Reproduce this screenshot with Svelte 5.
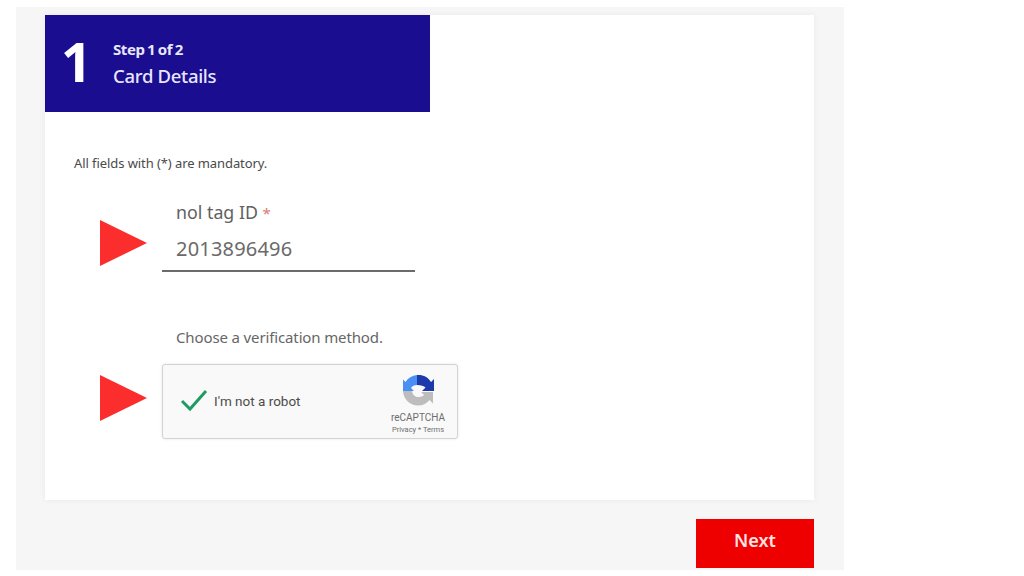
<script lang="ts">
    let tagId = $state('2013896496');
</script>

<div class="panel">
    <div class="card">
        <div class="step">
            <span class="step-num">1</span>
            <div class="step-text">
                <strong>Step 1 of 2</strong>
                <span>Card Details</span>
            </div>
        </div>

        <p class="note">All fields with (*) are mandatory.</p>

        <div class="row">
            <svg class="arrow" viewBox="0 0 47 46" aria-hidden="true"><polygon points="0,0 47,23 0,46" /></svg>
            <div class="field">
                <span class="label">nol tag ID <em>*</em></span>
                <span class="value">{tagId}</span>
            </div>
        </div>

        <p class="choose">Choose a verification method.</p>

        <div class="row captcha-row">
            <svg class="arrow" viewBox="0 0 47 46" aria-hidden="true"><polygon points="0,0 47,23 0,46" /></svg>
            <div class="captcha">
                <svg class="check" viewBox="0 0 28 24" aria-hidden="true">
                    <path d="M2 13 L10 21 L26 3" />
                </svg>
                <span class="robot">I'm not a robot</span>
                <div class="brand">
                    <svg class="logo" viewBox="0 0 32 32" aria-hidden="true">
                        <path fill="#4a90f2" d="M15 1 C10 1.500 6 4 3.500 8 L1 5.500 L1 17 L12 17 L9 14 C10 12 12.500 11 15 11 Z" />
                        <path fill="#1c3aa9" d="M15 1 C21 0.500 26 3 29 8 L32 5 L32 17 L20 17 L23.500 13.500 C22 12 19 11 15 11 Z" />
                        <path fill="#bdbdbd" d="M1 17 L10 17 C10.500 20.500 13 23 16 23 C18.500 23 20.500 22.500 22 21 L19 18 L31 18 L31 29.500 L27.500 26 C25 29.500 21 31.500 16 31.500 C7.500 31.500 1.500 25 1 17 Z" />
                    </svg>
                    <span class="re">reCAPTCHA</span>
                    <span class="terms">Privacy * Terms</span>
                </div>
            </div>
        </div>
    </div>

    <div class="actions">
        <button class="next">Next</button>
    </div>
</div>

<style>
    :global(body) {
        margin: 0;
        background: #fff;
    }

    .panel {
        box-sizing: border-box;
        width: 828px;
        height: 563px;
        margin: 7px 0 0 16px;
        padding: 8px 30px 2px 29px;
        background: #f6f6f6;
        font-family: "Noto Sans", "Open Sans", sans-serif;
    }

    .card {
        box-sizing: border-box;
        height: 485px;
        background: #fff;
        box-shadow: 0 0 6px #0000000f;
        overflow: hidden;
    }

    .step {
        display: flex;
        align-items: center;
        box-sizing: border-box;
        width: 385px;
        height: 97px;
        padding-left: 16px;
        gap: 27px;
        background: #1a0d90;
        color: #fff;
    }

    .step-num {
        width: 25px;
        margin-top: -6px;
        font-size: 54px;
        font-weight: 700;
        line-height: 1;
    }

    .step-text {
        display: flex;
        flex-direction: column;
        gap: 6px;
        margin-top: -1px;
        color: #e8e6fb;
    }

    .step-text strong {
        font-size: 15px;
        font-weight: 700;
        line-height: 19px;
        letter-spacing: -0.4px;
        word-spacing: -1px;
    }

    .step-text span {
        font-size: 18.500px;
        font-weight: 500;
        line-height: 22px;
        letter-spacing: -0.3px;
    }

    .note {
        margin: 42px 0 0 29px;
        font-size: 13px;
        line-height: 18px;
        letter-spacing: -0.08px;
        color: #4a4a4a;
    }

    .row {
        display: flex;
        align-items: center;
        gap: 15px;
        margin-top: 27px;
        padding-left: 55px;
    }

    .arrow {
        flex-shrink: 0;
        width: 47px;
        height: 46px;
        margin-top: 14px;
        fill: #fb2d2d;
    }

    .field {
        display: flex;
        flex-direction: column;
        box-sizing: border-box;
        width: 253px;
        height: 73px;
        padding: 1px 14px 0;
        border-bottom: 2px solid #6b6b6b;
    }

    .label {
        font-size: 17.800px;
        line-height: 24px;
        color: #616161;
    }

    .label em {
        font-style: normal;
        font-size: 15px;
        color: #d97a73;
    }

    .value {
        margin-top: 11px;
        font-size: 20px;
        line-height: 26px;
        letter-spacing: 0.2px;
        color: #6a6a6a;
    }

    .choose {
        margin: 54px 0 0 131px;
        font-size: 15px;
        line-height: 22px;
        letter-spacing: -0.13px;
        color: #666;
    }

    .captcha-row {
        margin-top: 16px;
    }

    .captcha-row .arrow {
        margin-top: -8px;
    }

    .captcha {
        display: flex;
        align-items: center;
        box-sizing: border-box;
        width: 296px;
        height: 75px;
        padding: 0 12px 0 17px;
        background: #f9f9f9;
        border: 1px solid #d3d3d3;
        border-radius: 3px;
        box-shadow: 0 0 3px #0000001a;
        font-family: Roboto, "Liberation Sans", sans-serif;
    }

    .check {
        width: 28px;
        height: 24px;
        margin-top: -3px;
    }

    .check path {
        fill: none;
        stroke: #1f9c61;
        stroke-width: 3;
    }

    .robot {
        margin: -2px 0 0 6px;
        font-size: 13.500px;
        color: #4c4c4c;
    }

    .brand {
        display: flex;
        flex-direction: column;
        align-items: center;
        margin: 6px 0 0 auto;
        color: #6d6d6d;
    }

    .logo {
        width: 32px;
        height: 32px;
        margin-bottom: 6px;
    }

    .re {
        font-size: 10px;
        line-height: 12px;
    }

    .terms {
        margin-top: 1px;
        font-size: 7.500px;
        line-height: 10px;
    }

    .actions {
        display: flex;
        justify-content: flex-end;
        margin-top: 19px;
    }

    .next {
        width: 118px;
        height: 49px;
        padding: 0 0 8px;
        border: none;
        background: #ee0000;
        color: #ffe3e3;
        font-family: inherit;
        font-size: 18px;
        font-weight: 600;
        cursor: pointer;
    }
</style>
